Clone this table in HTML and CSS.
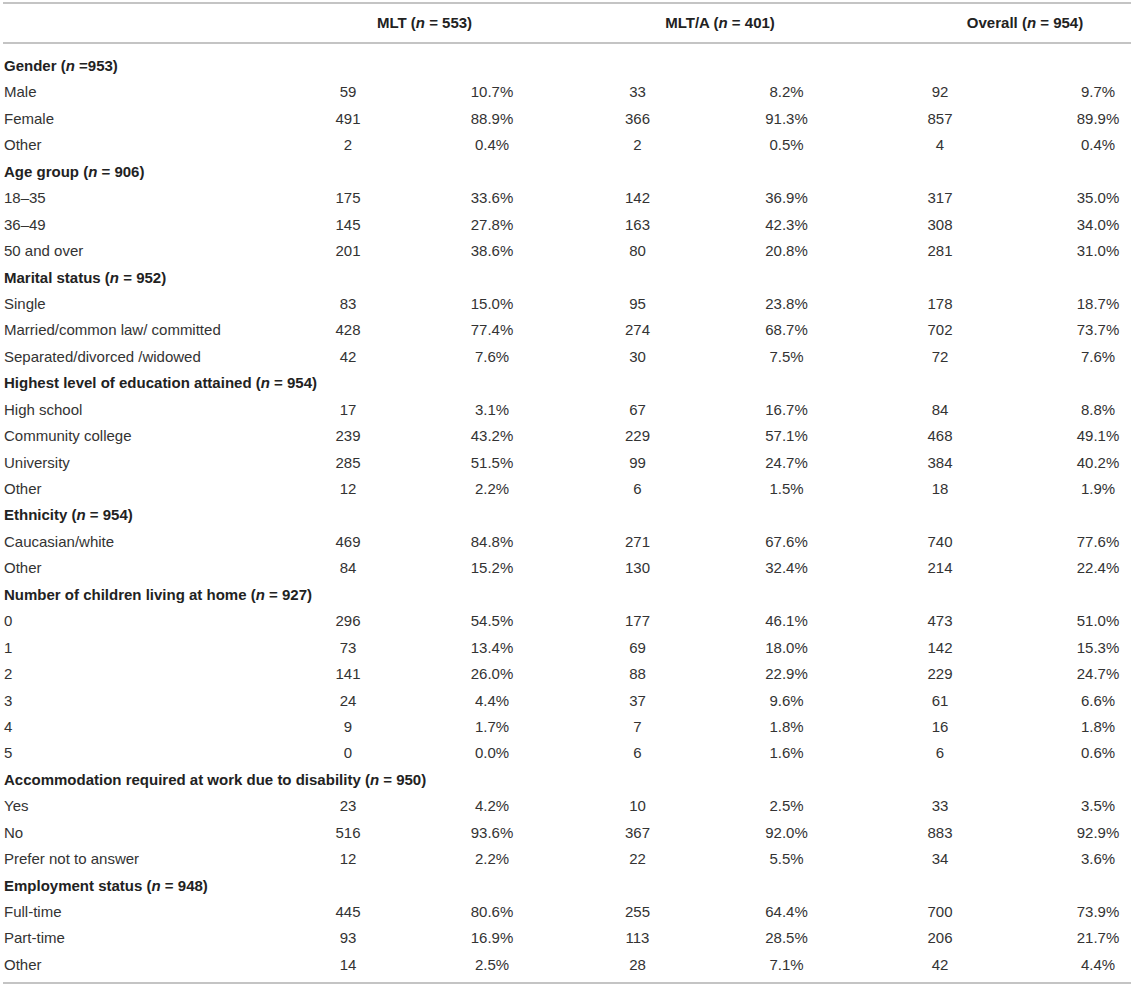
FILE: index.html
```html
<!DOCTYPE html>
<html lang="en">
<head>
<meta charset="utf-8">
<title>Table</title>
<link rel="stylesheet" href="styles.css">
</head>
<body>
<table class="data">
  <colgroup>
    <col class="c-label"><col class="c-n1"><col class="c-p1"><col class="c-n2"><col class="c-p2"><col class="c-n3"><col class="c-p3">
  </colgroup>
  <thead>
    <tr>
      <th class="h-label"></th>
      <th colspan="2" class="h-mlt">MLT (<i>n</i> = 553)</th>
      <th colspan="2" class="h-mlta">MLT/A (<i>n</i> = 401)</th>
      <th colspan="2" class="h-all">Overall (<i>n</i> = 954)</th>
    </tr>
  </thead>
  <tbody>
    <tr class="sec first"><td colspan="7">Gender (<i>n</i> =953)</td></tr>
    <tr><td>Male</td><td>59</td><td>10.7%</td><td>33</td><td>8.2%</td><td>92</td><td class="last">9.7%</td></tr>
    <tr><td>Female</td><td>491</td><td>88.9%</td><td>366</td><td>91.3%</td><td>857</td><td class="last">89.9%</td></tr>
    <tr><td>Other</td><td>2</td><td>0.4%</td><td>2</td><td>0.5%</td><td>4</td><td class="last">0.4%</td></tr>
    <tr class="sec"><td colspan="7">Age group (<i>n</i> = 906)</td></tr>
    <tr><td>18–35</td><td>175</td><td>33.6%</td><td>142</td><td>36.9%</td><td>317</td><td class="last">35.0%</td></tr>
    <tr><td>36–49</td><td>145</td><td>27.8%</td><td>163</td><td>42.3%</td><td>308</td><td class="last">34.0%</td></tr>
    <tr><td>50 and over</td><td>201</td><td>38.6%</td><td>80</td><td>20.8%</td><td>281</td><td class="last">31.0%</td></tr>
    <tr class="sec"><td colspan="7">Marital status (<i>n</i> = 952)</td></tr>
    <tr><td>Single</td><td>83</td><td>15.0%</td><td>95</td><td>23.8%</td><td>178</td><td class="last">18.7%</td></tr>
    <tr><td>Married/common law/ committed</td><td>428</td><td>77.4%</td><td>274</td><td>68.7%</td><td>702</td><td class="last">73.7%</td></tr>
    <tr><td>Separated/divorced /widowed</td><td>42</td><td>7.6%</td><td>30</td><td>7.5%</td><td>72</td><td class="last">7.6%</td></tr>
    <tr class="sec"><td colspan="7">Highest level of education attained (<i>n</i> = 954)</td></tr>
    <tr><td>High school</td><td>17</td><td>3.1%</td><td>67</td><td>16.7%</td><td>84</td><td class="last">8.8%</td></tr>
    <tr><td>Community college</td><td>239</td><td>43.2%</td><td>229</td><td>57.1%</td><td>468</td><td class="last">49.1%</td></tr>
    <tr><td>University</td><td>285</td><td>51.5%</td><td>99</td><td>24.7%</td><td>384</td><td class="last">40.2%</td></tr>
    <tr><td>Other</td><td>12</td><td>2.2%</td><td>6</td><td>1.5%</td><td>18</td><td class="last">1.9%</td></tr>
    <tr class="sec"><td colspan="7">Ethnicity (<i>n</i> = 954)</td></tr>
    <tr><td>Caucasian/white</td><td>469</td><td>84.8%</td><td>271</td><td>67.6%</td><td>740</td><td class="last">77.6%</td></tr>
    <tr><td>Other</td><td>84</td><td>15.2%</td><td>130</td><td>32.4%</td><td>214</td><td class="last">22.4%</td></tr>
    <tr class="sec"><td colspan="7">Number of children living at home (<i>n</i> = 927)</td></tr>
    <tr><td>0</td><td>296</td><td>54.5%</td><td>177</td><td>46.1%</td><td>473</td><td class="last">51.0%</td></tr>
    <tr><td>1</td><td>73</td><td>13.4%</td><td>69</td><td>18.0%</td><td>142</td><td class="last">15.3%</td></tr>
    <tr><td>2</td><td>141</td><td>26.0%</td><td>88</td><td>22.9%</td><td>229</td><td class="last">24.7%</td></tr>
    <tr><td>3</td><td>24</td><td>4.4%</td><td>37</td><td>9.6%</td><td>61</td><td class="last">6.6%</td></tr>
    <tr><td>4</td><td>9</td><td>1.7%</td><td>7</td><td>1.8%</td><td>16</td><td class="last">1.8%</td></tr>
    <tr><td>5</td><td>0</td><td>0.0%</td><td>6</td><td>1.6%</td><td>6</td><td class="last">0.6%</td></tr>
    <tr class="sec"><td colspan="7">Accommodation required at work due to disability (<i>n</i> = 950)</td></tr>
    <tr><td>Yes</td><td>23</td><td>4.2%</td><td>10</td><td>2.5%</td><td>33</td><td class="last">3.5%</td></tr>
    <tr><td>No</td><td>516</td><td>93.6%</td><td>367</td><td>92.0%</td><td>883</td><td class="last">92.9%</td></tr>
    <tr><td>Prefer not to answer</td><td>12</td><td>2.2%</td><td>22</td><td>5.5%</td><td>34</td><td class="last">3.6%</td></tr>
    <tr class="sec"><td colspan="7">Employment status (<i>n</i> = 948)</td></tr>
    <tr><td>Full-time</td><td>445</td><td>80.6%</td><td>255</td><td>64.4%</td><td>700</td><td class="last">73.9%</td></tr>
    <tr><td>Part-time</td><td>93</td><td>16.9%</td><td>113</td><td>28.5%</td><td>206</td><td class="last">21.7%</td></tr>
    <tr class="end"><td>Other</td><td>14</td><td>2.5%</td><td>28</td><td>7.1%</td><td>42</td><td class="last">4.4%</td></tr>
  </tbody>
</table>
</body>
</html>
```

FILE: styles.css
```css
html, body {
  margin: 0;
  padding: 0;
  background: #ffffff;
}

body {
  font-family: "Liberation Sans", Arial, sans-serif;
  font-size: 15px;
  color: #333333;
}

.data {
  table-layout: fixed;
  width: 1128px;
  margin: 2px 0 0 3px;
  border-collapse: collapse;
  border-top: 2px solid #c4c4c4;
  border-bottom: 2px solid #c4c4c4;
}

.c-label { width: 273px; }
.c-n1 { width: 144px; }
.c-p1 { width: 144px; }
.c-n2 { width: 147px; }
.c-p2 { width: 151px; }
.c-n3 { width: 156px; }
.c-p3 { width: 113px; }

.data thead tr {
  border-bottom: 2px solid #c4c4c4;
}

.data th {
  font-weight: bold;
  text-align: center;
  line-height: 18px;
  padding: 10px 0;
  color: #222222;
}

.data th i,
.data td i {
  font-style: italic;
}

.h-mlt { padding-left: 9px !important; }
.h-mlta { padding-left: 14px !important; }
.h-all { padding-left: 57px !important; }

.data td {
  padding: 4px 0;
  line-height: 18.44px;
  text-align: center;
  white-space: nowrap;
}

.data td:first-child {
  text-align: left;
  padding-left: 1px;
}

.data td.last {
  padding-left: 47px;
}

.data tr.sec td {
  font-weight: bold;
  text-align: left;
  color: #222222;
}

.data tr.first td {
  padding-top: 13px;
}

.data tr.end td {
  padding-bottom: 8px;
}
```
